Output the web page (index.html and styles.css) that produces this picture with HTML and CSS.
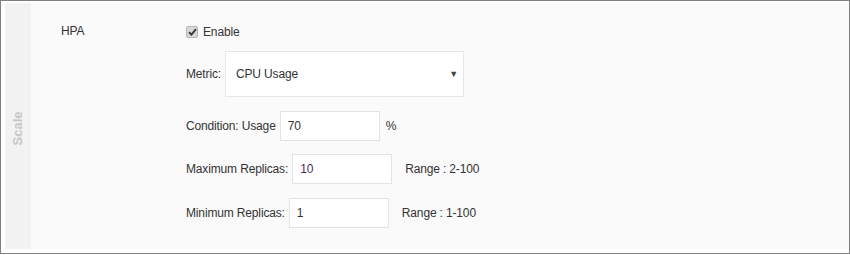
FILE: index.html
```html
<!DOCTYPE html>
<html lang="en">
<head>
  <meta charset="UTF-8" />
  <meta name="viewport" content="width=device-width, initial-scale=1.0" />
  <title>Scale</title>
  <link rel="stylesheet" href="styles.css">
</head>
<body>
  <div class="frame">
    <div class="panel">
      <div class="side"><span class="side-title">Scale</span></div>

      <div class="content">
        <div class="name">HPA</div>

        <div class="form">
          <label class="check-row">
            <span class="checkbox">
              <svg width="9" height="8" viewBox="0 0 9 8"><path d="M1 4.2 L3.4 6.6 L8 1.2" fill="none" stroke="#333" stroke-width="1.8"/></svg>
            </span>
            Enable
          </label>

          <div class="row row-metric">
            <span class="label">Metric:</span>
            <div class="select">
              <span>CPU Usage</span>
              <span class="arrow">&#9660;</span>
            </div>
          </div>

          <div class="row row-cond">
            <span class="label">Condition: Usage</span>
            <div class="input">70</div>
            <span class="suffix pct">%</span>
          </div>

          <div class="row row-max">
            <span class="label">Maximum Replicas:</span>
            <div class="input purple">10</div>
            <span class="suffix">Range : 2-100</span>
          </div>

          <div class="row row-min">
            <span class="label">Minimum Replicas:</span>
            <div class="input">1</div>
            <span class="suffix">Range : 1-100</span>
          </div>
        </div>
      </div>
    </div>
  </div>
</body>
</html>
```

FILE: styles.css
```css
* {
  box-sizing: border-box;
}

html, body {
  margin: 0;
  padding: 0;
  background: #fff;
}

body {
  font-family: 'Liberation Sans', Arial, sans-serif;
  font-size: 12px;
  color: #333;
  letter-spacing: -0.15px;
}

.frame {
  width: 850px;
  height: 254px;
  border: 1px solid #808080;
  padding: 2px 0 4px 4px;
}

.panel {
  display: flex;
  height: 100%;
}

.side {
  width: 26px;
  background: #f2f2f2;
  display: flex;
  align-items: center;
  justify-content: center;
}

.side-title {
  transform: rotate(-90deg);
  font-weight: bold;
  font-size: 13px;
  letter-spacing: 0;
  color: #c6c6c6;
  margin-top: 4px;
}

.content {
  flex: 1;
  background: #fafafa;
  display: flex;
  padding: 21px 0 0 30px;
}

.name {
  width: 125px;
}

.form {
  display: flex;
  flex-direction: column;
}

.check-row {
  display: flex;
  align-items: center;
  gap: 5px;
  height: 14px;
  margin-top: 1px;
}

.checkbox {
  width: 12px;
  height: 12px;
  background: #d8d8d8;
  border: 1px solid #b5b5b5;
  border-radius: 2px;
  display: flex;
  align-items: center;
  justify-content: center;
}

.row {
  display: flex;
  align-items: center;
}

.label {
  margin-right: 4px;
}

.select {
  width: 239px;
  height: 46px;
  background: #fff;
  border: 1px solid #e6e6e6;
  display: flex;
  align-items: center;
  justify-content: space-between;
  padding: 0 5px 0 10px;
}

.arrow {
  font-size: 9px;
  color: #444;
}

.input {
  width: 100px;
  height: 30px;
  background: #fff;
  border: 1px solid #e3e3e3;
  display: flex;
  align-items: center;
  padding: 0 7px;
}

.purple {
  color: #4b2a5c;
}

.suffix {
  margin-left: 13px;
}

.suffix.pct {
  margin-left: 6px;
}

.row-metric {
  margin-top: 12px;
}

.row-cond {
  margin-top: 14px;
}

.row-max {
  margin-top: 13px;
}

.row-min {
  margin-top: 14px;
}
```
